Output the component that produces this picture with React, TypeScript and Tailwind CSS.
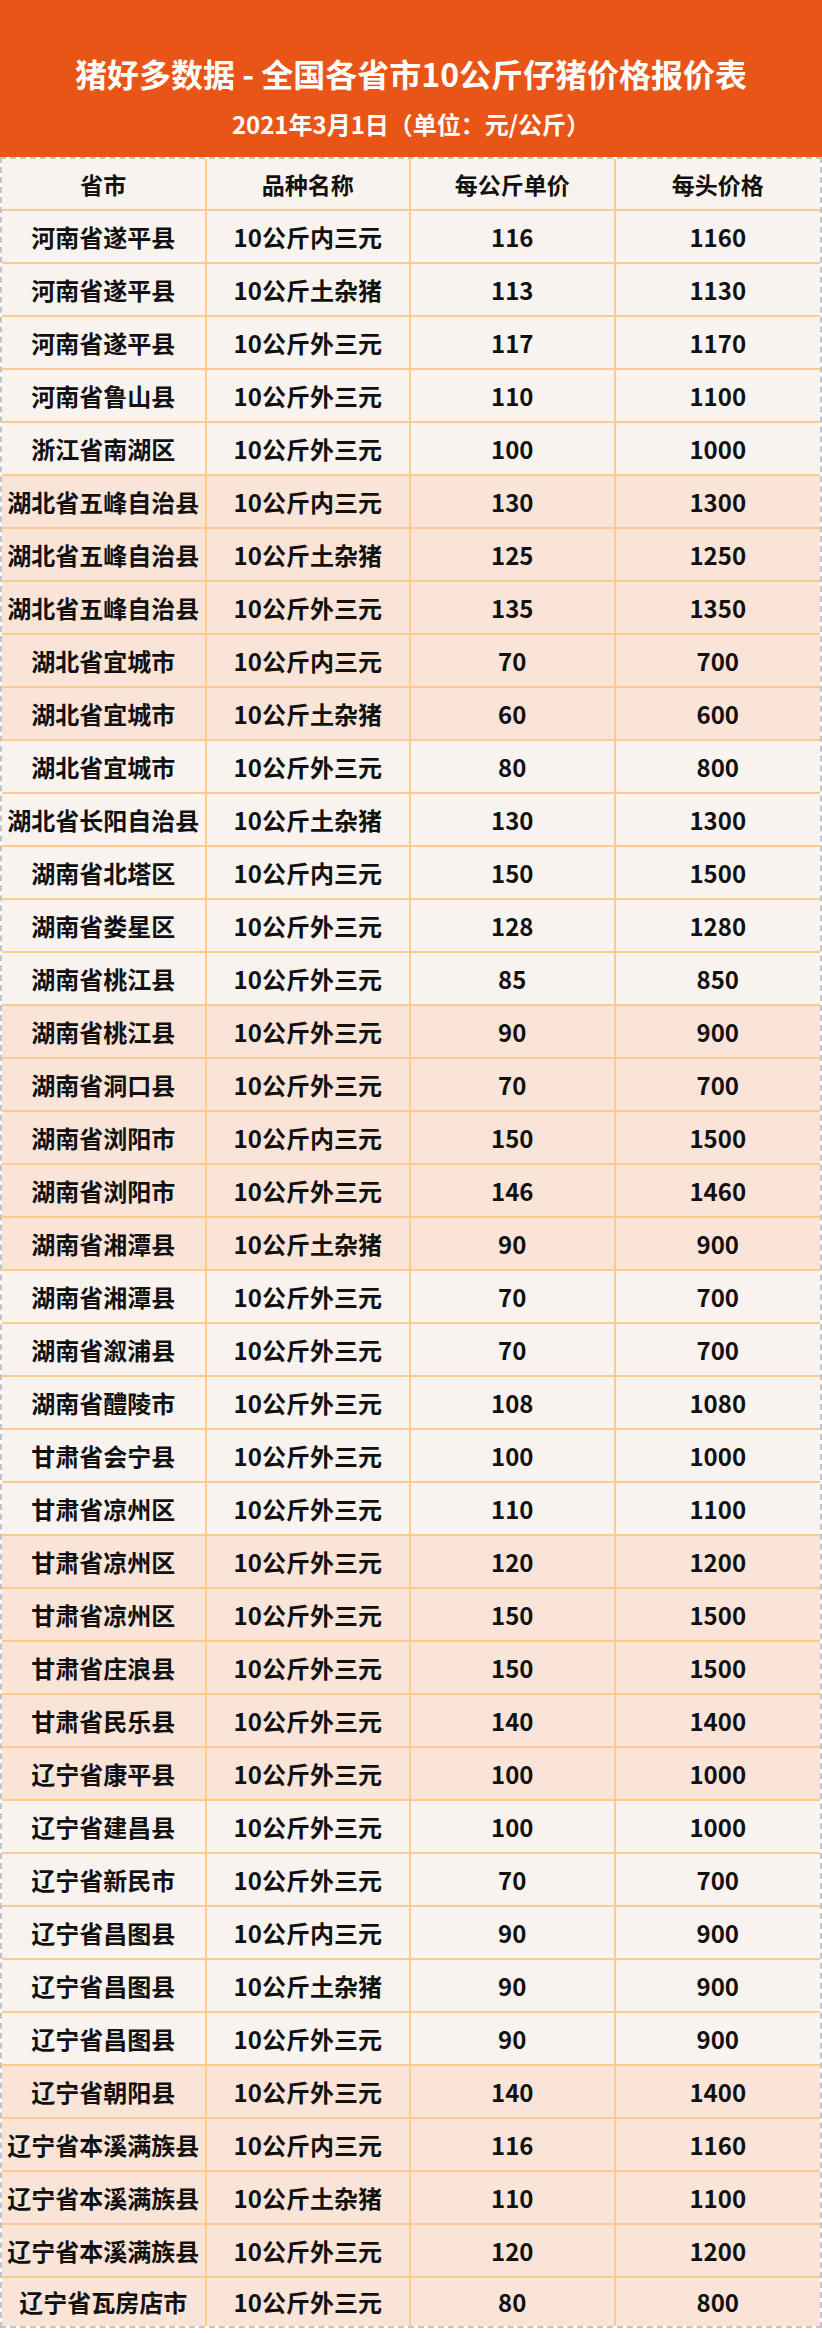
import React from 'react';

type Row = { area: string; kind: string; unit: number; head: number };

const rows: Row[] = [
  { area: '河南省遂平县', kind: '10公斤内三元', unit: 116, head: 1160 },
  { area: '河南省遂平县', kind: '10公斤土杂猪', unit: 113, head: 1130 },
  { area: '河南省遂平县', kind: '10公斤外三元', unit: 117, head: 1170 },
  { area: '河南省鲁山县', kind: '10公斤外三元', unit: 110, head: 1100 },
  { area: '浙江省南湖区', kind: '10公斤外三元', unit: 100, head: 1000 },
  { area: '湖北省五峰自治县', kind: '10公斤内三元', unit: 130, head: 1300 },
  { area: '湖北省五峰自治县', kind: '10公斤土杂猪', unit: 125, head: 1250 },
  { area: '湖北省五峰自治县', kind: '10公斤外三元', unit: 135, head: 1350 },
  { area: '湖北省宜城市', kind: '10公斤内三元', unit: 70, head: 700 },
  { area: '湖北省宜城市', kind: '10公斤土杂猪', unit: 60, head: 600 },
  { area: '湖北省宜城市', kind: '10公斤外三元', unit: 80, head: 800 },
  { area: '湖北省长阳自治县', kind: '10公斤土杂猪', unit: 130, head: 1300 },
  { area: '湖南省北塔区', kind: '10公斤内三元', unit: 150, head: 1500 },
  { area: '湖南省娄星区', kind: '10公斤外三元', unit: 128, head: 1280 },
  { area: '湖南省桃江县', kind: '10公斤外三元', unit: 85, head: 850 },
  { area: '湖南省桃江县', kind: '10公斤外三元', unit: 90, head: 900 },
  { area: '湖南省洞口县', kind: '10公斤外三元', unit: 70, head: 700 },
  { area: '湖南省浏阳市', kind: '10公斤内三元', unit: 150, head: 1500 },
  { area: '湖南省浏阳市', kind: '10公斤外三元', unit: 146, head: 1460 },
  { area: '湖南省湘潭县', kind: '10公斤土杂猪', unit: 90, head: 900 },
  { area: '湖南省湘潭县', kind: '10公斤外三元', unit: 70, head: 700 },
  { area: '湖南省溆浦县', kind: '10公斤外三元', unit: 70, head: 700 },
  { area: '湖南省醴陵市', kind: '10公斤外三元', unit: 108, head: 1080 },
  { area: '甘肃省会宁县', kind: '10公斤外三元', unit: 100, head: 1000 },
  { area: '甘肃省凉州区', kind: '10公斤外三元', unit: 110, head: 1100 },
  { area: '甘肃省凉州区', kind: '10公斤外三元', unit: 120, head: 1200 },
  { area: '甘肃省凉州区', kind: '10公斤外三元', unit: 150, head: 1500 },
  { area: '甘肃省庄浪县', kind: '10公斤外三元', unit: 150, head: 1500 },
  { area: '甘肃省民乐县', kind: '10公斤外三元', unit: 140, head: 1400 },
  { area: '辽宁省康平县', kind: '10公斤外三元', unit: 100, head: 1000 },
  { area: '辽宁省建昌县', kind: '10公斤外三元', unit: 100, head: 1000 },
  { area: '辽宁省新民市', kind: '10公斤外三元', unit: 70, head: 700 },
  { area: '辽宁省昌图县', kind: '10公斤内三元', unit: 90, head: 900 },
  { area: '辽宁省昌图县', kind: '10公斤土杂猪', unit: 90, head: 900 },
  { area: '辽宁省昌图县', kind: '10公斤外三元', unit: 90, head: 900 },
  { area: '辽宁省朝阳县', kind: '10公斤外三元', unit: 140, head: 1400 },
  { area: '辽宁省本溪满族县', kind: '10公斤内三元', unit: 116, head: 1160 },
  { area: '辽宁省本溪满族县', kind: '10公斤土杂猪', unit: 110, head: 1100 },
  { area: '辽宁省本溪满族县', kind: '10公斤外三元', unit: 120, head: 1200 },
  { area: '辽宁省瓦房店市', kind: '10公斤外三元', unit: 80, head: 800 },
];

const font = { fontFamily: '"Noto Sans CJK SC", "Noto Sans", sans-serif' };

function Cell({ children, last }: { children: React.ReactNode; last?: boolean }) {
  return (
    <div
      className={
        last
          ? 'flex items-center justify-center'
          : 'flex items-center justify-center border-r-2 border-[#fccb8d]'
      }
    >
      {children}
    </div>
  );
}

export default function App() {
  return (
    <div className="w-[822px] h-[2333px] bg-white" style={font}>
      {/* Title block */}
      <div className="h-[157px] bg-[#e95516] flex flex-col items-center text-white font-bold">
        <div className="mt-[51px] text-[32px] leading-[44px]">猪好多数据 - 全国各省市10公斤仔猪价格报价表</div>
        <div className="mt-[14px] text-[24px] leading-[30px]">2021年3月1日（单位：元/公斤）</div>
      </div>

      {/* Table */}
      <div className="border-2 border-dashed border-[#c4c4c4] text-[#111] font-bold">
        <div className="grid grid-cols-4 h-[52px] bg-[#f8f3ef] border-b-2 border-[#fccb8d] text-[23px]">
          <Cell>省市</Cell>
          <Cell>品种名称</Cell>
          <Cell>每公斤单价</Cell>
          <Cell last>每头价格</Cell>
        </div>
        {rows.map((r, i) => {
          const pink = Math.floor(i / 5) % 2 === 1;
          const isLast = i === rows.length - 1;
          return (
            <div
              key={i}
              className={[
                'grid grid-cols-4 text-[24px]',
                pink ? 'bg-[#fae4d8]' : 'bg-[#f8f3ef]',
                isLast ? 'h-[48px]' : 'h-[53px] border-b-2 border-[#fccb8d]',
              ].join(' ')}
            >
              <Cell>{r.area}</Cell>
              <Cell>{r.kind}</Cell>
              <Cell>{r.unit}</Cell>
              <Cell last>{r.head}</Cell>
            </div>
          );
        })}
      </div>
    </div>
  );
}
